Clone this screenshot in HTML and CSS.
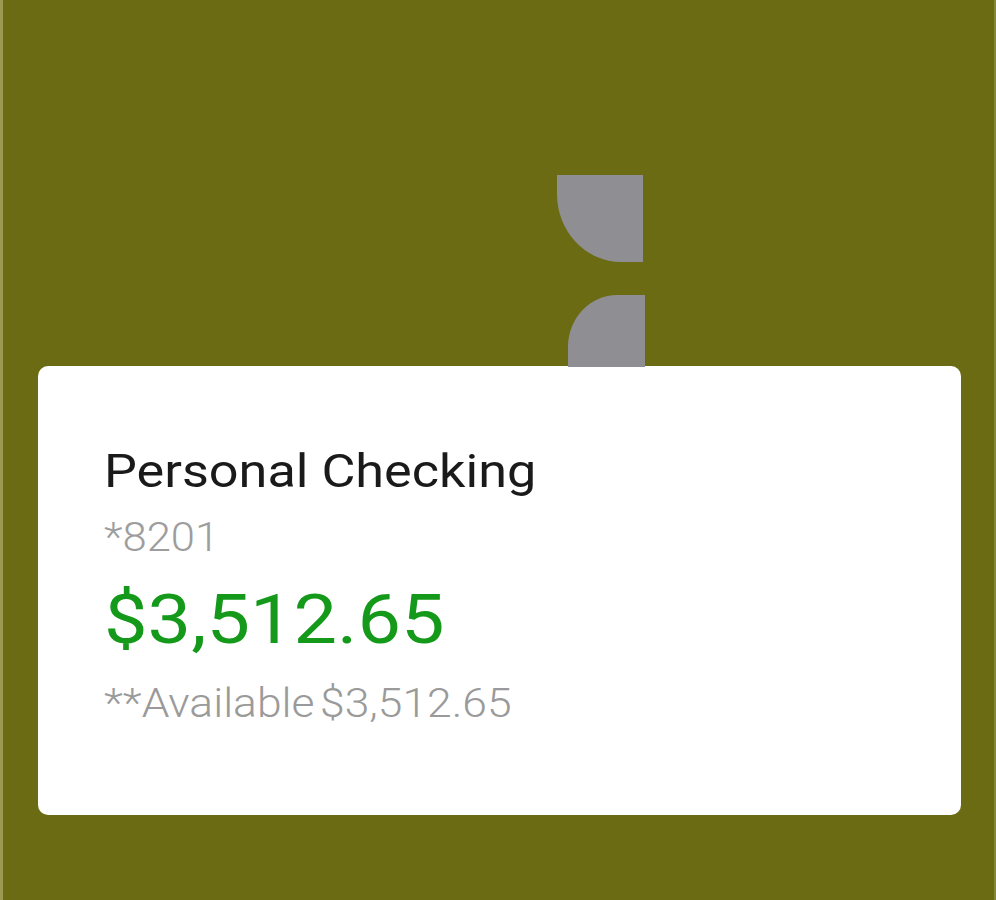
FILE: index.html
```html
<!DOCTYPE html>
<html>
<head>
<meta charset="utf-8">
<link rel="stylesheet" href="styles.css">
</head>
<body>
<div class="screen">
  <div class="art">
    <div class="piece piece-top"></div>
    <div class="piece piece-bottom"></div>
  </div>
  <div class="card">
    <div class="line title">Personal Checking</div>
    <div class="line acct">*8201</div>
    <div class="line balance">$3,512.65</div>
    <div class="line avail"><span>**Available</span><span>$3,512.65</span></div>
  </div>
</div>
</body>
</html>
```
FILE: styles.css
```css
html, body {
  margin: 0;
  padding: 0;
}
body {
  width: 996px;
  height: 900px;
  overflow: hidden;
  background: #6b6b13;
  font-family: Roboto, "Noto Sans", sans-serif;
}
.screen {
  box-sizing: border-box;
  width: 996px;
  height: 900px;
  background: #6b6b13;
  border-left: 3px solid #9a9a52;
  border-right: 2px solid #86863c;
  padding-top: 175px;
}
.art {
  display: flex;
  flex-direction: column;
  align-items: flex-end;
  width: 643px;
  margin-left: -3px;
}
.piece {
  background: #8f8f93;
}
.piece-top {
  width: 86px;
  height: 87px;
  border-bottom-left-radius: 64px 68px;
}
.piece-bottom {
  width: 77px;
  height: 72px;
  margin-top: 33px;
  margin-right: -2px;
  border-top-left-radius: 49px 52px;
}
.card {
  box-sizing: border-box;
  margin-left: 35px;
  width: 923px;
  height: 449px;
  margin-top: -1px;
  background: #ffffff;
  border-radius: 10px;
  padding: 77px 0 0 66px;
  display: flex;
  flex-direction: column;
  align-items: flex-start;
}
.line {
  transform-origin: left center;
  white-space: nowrap;
}
.title {
  font-size: 47px;
  line-height: 56px;
  color: #1a1a1a;
  transform: scaleX(1.11);
}
.acct {
  font-size: 40px;
  line-height: 48px;
  font-weight: 300;
  color: #9d9d9d;
  margin-top: 15px;
  transform: scaleX(1.09);
}
.balance {
  font-size: 68px;
  line-height: 80px;
  color: #15991a;
  margin-top: 18px;
  transform: scaleX(1.14);
}
.avail {
  font-size: 40px;
  line-height: 48px;
  font-weight: 300;
  color: #9a9a9a;
  margin-top: 20px;
  display: flex;
  gap: 5px;
  transform: scaleX(1.11);
}
```
